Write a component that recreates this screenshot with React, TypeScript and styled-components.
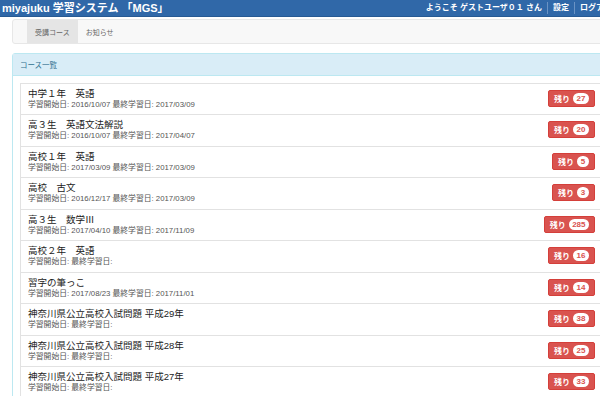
import React, { FC } from "react";
import styled, { createGlobalStyle } from "styled-components";

type Course = { name: string; start: string; last: string; left: number };

const courses: Course[] = [
  { name: "中学１年　英語", start: "2016/10/07", last: "2017/03/09", left: 27 },
  { name: "高３生　英語文法解説", start: "2016/10/07", last: "2017/04/07", left: 20 },
  { name: "高校１年　英語", start: "2017/03/09", last: "2017/03/09", left: 5 },
  { name: "高校　古文", start: "2016/12/17", last: "2017/03/09", left: 3 },
  { name: "高３生　数学Ⅲ", start: "2017/04/10", last: "2017/11/09", left: 285 },
  { name: "高校２年　英語", start: "", last: "", left: 16 },
  { name: "習字の筆っこ", start: "2017/08/23", last: "2017/11/01", left: 14 },
  { name: "神奈川県公立高校入試問題 平成29年", start: "", last: "", left: 38 },
  { name: "神奈川県公立高校入試問題 平成28年", start: "", last: "", left: 25 },
  { name: "神奈川県公立高校入試問題 平成27年", start: "", last: "", left: 33 },
];

const GlobalStyle = createGlobalStyle`
  html, body {
    margin: 0;
    padding: 0;
    overflow: hidden;
    background: #fff;
  }
  body {
    font-family: "Liberation Sans", "Noto Sans CJK JP", sans-serif;
    color: #333;
  }
`;

const App: FC = () => {
  return (
    <Page>
      <GlobalStyle />
      <Header>
        <Brand>miyajuku 学習システム 「MGS」</Brand>
        <UserNav>
          <NavItem>ようこそ ゲストユーザ０１ さん</NavItem>
          <NavItem divider>設定</NavItem>
          <NavItem divider>ログアウト</NavItem>
        </UserNav>
      </Header>

      <Main>
        <Tabs>
          <Tab active>受講コース</Tab>
          <Tab>お知らせ</Tab>
        </Tabs>

        <Panel>
          <PanelHeading>コース一覧</PanelHeading>
          <PanelBody>
            {courses.map((c) => (
              <Item key={c.name}>
                <ItemText>
                  <Title>{c.name}</Title>
                  <Dates>
                    学習開始日:{c.start ? " " + c.start : ""} 最終学習日:{c.last ? " " + c.last : ""}
                  </Dates>
                </ItemText>
                <LeftButton>
                  残り <Count>{c.left}</Count>
                </LeftButton>
              </Item>
            ))}
          </PanelBody>
        </Panel>
      </Main>
    </Page>
  );
};

const Page = styled.div`
  width: 620px;
  display: flex;
  flex-direction: column;
`;

const Header = styled.div`
  height: 17px;
  width: 625px;
  box-sizing: border-box;
  background: #3068a8;
  border-bottom: 1px solid #275a93;
  display: flex;
  align-items: center;
  justify-content: space-between;
  padding-left: 2px;
`;

const Brand = styled.div`
  color: #fff;
  font-weight: bold;
  font-size: 11px;
  line-height: 16px;
  white-space: nowrap;
`;

const UserNav = styled.div`
  display: flex;
  align-items: center;
  flex-shrink: 0;
`;

const NavItem = styled.span<{ divider?: boolean }>`
  color: #fff;
  font-size: 8px;
  font-weight: bold;
  line-height: 12px;
  white-space: nowrap;
  padding: 0 5px;
  border-left: ${(p) => (p.divider ? "1px solid #6a93c4" : "none")};
`;

const Main = styled.div`
  padding: 2px 0 0 12px;
  display: flex;
  flex-direction: column;
  gap: 9px;
`;

const Tabs = styled.div`
  height: 25px;
  box-sizing: border-box;
  background: #f8f8f8;
  border: 1px solid #e7e7e7;
  border-radius: 3px;
  display: flex;
  padding-left: 14px;
`;

const Tab = styled.div<{ active?: boolean }>`
  display: flex;
  align-items: center;
  padding: 0 8px;
  font-size: 7px;
  color: #666;
  background: ${(p) => (p.active ? "#e5e5e5" : "transparent")};
`;

const Panel = styled.div`
  border: 1px solid #bce8f1;
  border-radius: 3px;
  display: flex;
  flex-direction: column;
`;

const PanelHeading = styled.div`
  height: 22px;
  box-sizing: border-box;
  background: #d9edf7;
  border-bottom: 1px solid #bce8f1;
  color: #31708f;
  font-size: 7.5px;
  display: flex;
  align-items: center;
  padding-left: 7px;
`;

const PanelBody = styled.div`
  padding: 7px 0 8px 7px;
  display: flex;
  flex-direction: column;
`;

const Item = styled.div`
  height: 32.44px;
  box-sizing: border-box;
  border: 1px solid #e2e2e2;
  margin-bottom: -1px;
  display: flex;
  justify-content: space-between;
  align-items: flex-start;
  padding: 3px 23px 0 7px;
  background: #fff;
`;

const ItemText = styled.div`
  display: flex;
  flex-direction: column;
`;

const Title = styled.div`
  font-size: 9.5px;
  line-height: 13px;
  color: #222;
`;

const Dates = styled.div`
  font-size: 7.8px;
  line-height: 10px;
  color: #555;
`;

const LeftButton = styled.div`
  margin-top: 3px;
  height: 17px;
  box-sizing: border-box;
  background: #d9534f;
  border: 1px solid #d43f3a;
  border-radius: 2px;
  color: #fff;
  font-size: 8px;
  font-weight: bold;
  display: flex;
  align-items: center;
  gap: 3px;
  padding: 0 5px;
  white-space: nowrap;
`;

const Count = styled.span`
  background: #fff;
  color: #d9534f;
  border-radius: 6px;
  font-size: 8px;
  font-weight: bold;
  line-height: 11px;
  padding: 0 3.5px;
  min-width: 5px;
  text-align: center;
`;

export default App;
